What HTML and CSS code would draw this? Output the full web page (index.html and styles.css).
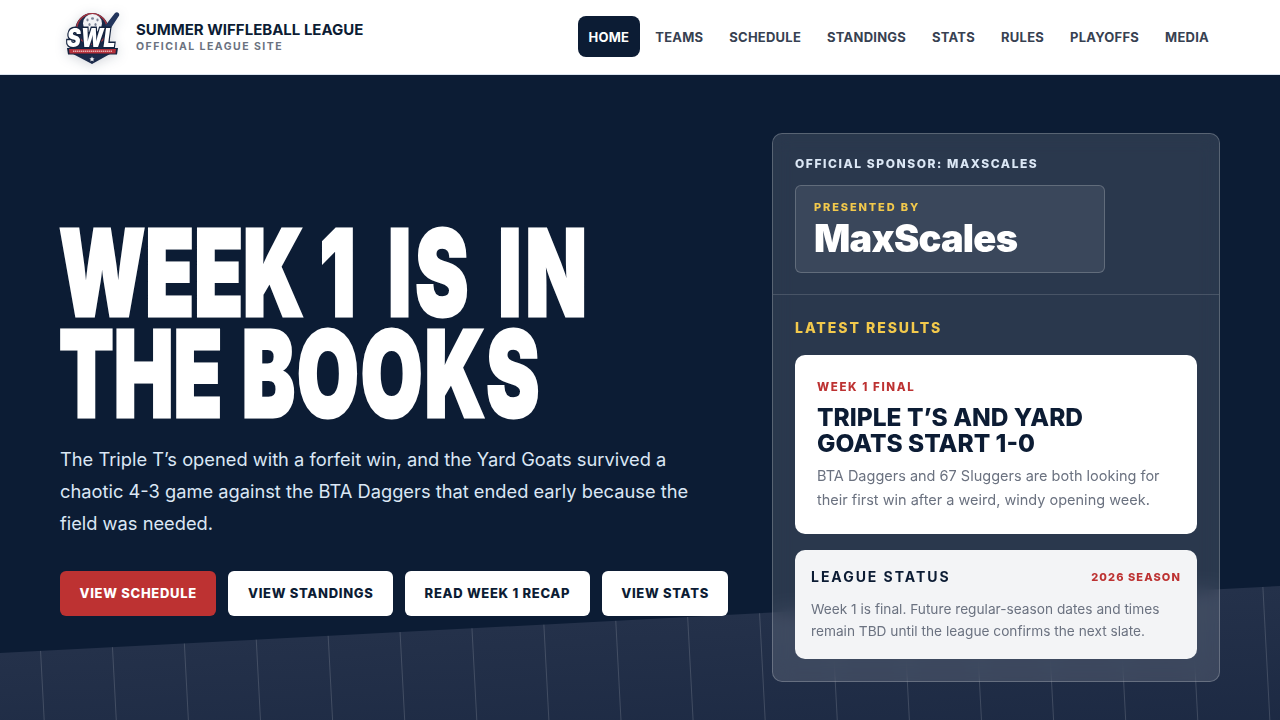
FILE: index.html
```html
<!DOCTYPE html>
<html lang="en">
<head>
    <meta charset="UTF-8">
    <meta name="viewport" content="width=device-width, initial-scale=1.0">
    <title>Summer Wiffleball League</title>
    <link rel="stylesheet" href="styles.css">
</head>
<body>
    <header class="topbar">
        <a href="#" class="brand">
            <svg class="brand_logo" viewBox="0 0 64 64" aria-hidden="true">
                <path d="M15 26 A17 18 0 0 1 49 26 L50 49 L32 59 L13 49Z" fill="#1b2a4a"/>
                <circle cx="32" cy="24" r="16" fill="#a9343f"/>
                <circle cx="32" cy="24" r="14.6" fill="#1b2a4a"/>
                <circle cx="32.5" cy="18.5" r="9.5" fill="#f1f2f5"/>
                <ellipse cx="32.5" cy="13.5" rx="1.5" ry="1.2" fill="#7a8296"/>
                <ellipse cx="27.5" cy="15" rx="1.1" ry="1.4" fill="#7a8296"/>
                <ellipse cx="37.5" cy="15" rx="1.1" ry="1.4" fill="#7a8296"/>
                <ellipse cx="29.5" cy="19.5" rx="1.1" ry="1.5" fill="#7a8296"/>
                <ellipse cx="35.5" cy="19.5" rx="1.1" ry="1.5" fill="#7a8296"/>
                <path d="M41 26 L55 8 Q57 6.5 58.5 8 Q60 9.5 58.5 11.5 L47 29Z" fill="#22355c"/>
                <text class="logo_text" text-anchor="middle" transform="translate(31 42) scale(1 1.2)">SWL</text>
                <path d="M7 43 H58 L57 49.5 H8Z" fill="#14233f"/>
                <path d="M9 44 H56 L55.5 48.5 H9.5Z" fill="#b5303a"/>
                <path d="M13 46.3 H52" stroke="#f3d9d9" stroke-width="1.6" stroke-dasharray="1.4 .6" opacity=".75"/>
                <path d="M32 51.5 l.8 1.7 1.8 .2 -1.3 1.2 .3 1.8 -1.6 -.9 -1.6 .9 .3 -1.8 -1.3 -1.2 1.8 -.2Z" fill="#f1f2f5"/>
            </svg>
            <span class="brand_text">
                <span class="brand_title">SUMMER WIFFLEBALL LEAGUE</span>
                <span class="brand_sub">OFFICIAL LEAGUE SITE</span>
            </span>
        </a>
        <nav class="mainnav">
            <a href="#" class="active">HOME</a>
            <a href="#">TEAMS</a>
            <a href="#">SCHEDULE</a>
            <a href="#">STANDINGS</a>
            <a href="#">STATS</a>
            <a href="#">RULES</a>
            <a href="#">PLAYOFFS</a>
            <a href="#">MEDIA</a>
        </nav>
    </header>

    <main class="hero">
        <div class="ground"></div>

        <section class="hero_left">
            <h1 class="headline">WEEK 1 <span class="head_end">IS IN</span><br>THE <span class="head_books">BOOKS</span></h1>
            <p class="lede">The Triple T&rsquo;s opened with a forfeit win, and the Yard Goats survived a chaotic 4-3 game against the BTA Daggers that ended early because the field was needed.</p>
            <div class="actions">
                <a href="#" class="btn btn_red">VIEW SCHEDULE</a>
                <a href="#" class="btn">VIEW STANDINGS</a>
                <a href="#" class="btn">READ WEEK 1 RECAP</a>
                <a href="#" class="btn">VIEW STATS</a>
            </div>
        </section>

        <aside class="panel">
            <div class="sponsor">
                <p class="sponsor_label">OFFICIAL SPONSOR: MAXSCALES</p>
                <div class="sponsor_box">
                    <p class="presented">PRESENTED BY</p>
                    <p class="sponsor_name">MaxScales</p>
                </div>
            </div>
            <div class="results">
                <h2 class="results_title">LATEST RESULTS</h2>
                <article class="result_card">
                    <p class="result_tag">WEEK 1 FINAL</p>
                    <h3 class="result_head">TRIPLE T&rsquo;S AND YARD GOATS START 1-0</h3>
                    <p class="result_text">BTA Daggers and 67 Sluggers are both looking for their first win after a weird, windy opening week.</p>
                </article>
                <article class="status_card">
                    <div class="status_top">
                        <h3 class="status_title">LEAGUE STATUS</h3>
                        <span class="status_season">2026 SEASON</span>
                    </div>
                    <p class="status_text">Week 1 is final. Future regular-season dates and times remain TBD until the league confirms the next slate.</p>
                </article>
            </div>
        </aside>
    </main>
</body>
</html>
```

FILE: styles.css
```css
*{
    margin:0;
    padding:0;
    box-sizing:border-box;
}
html,body{
    height:100%;
    overflow:hidden;
}
body{
    font-family:Inter,"Liberation Sans",sans-serif;
    background:#0c1c34;
}
a{
    text-decoration:none;
}

/* top bar */
.topbar{
    height:75px;
    padding:0 60px 1px;
    display:flex;
    justify-content:space-between;
    align-items:center;
    background:#fff;
    border-bottom:1px solid #dbe3ee;
}
.brand{
    display:flex;
    align-items:center;
    gap:12px;
}
.brand_logo{
    width:64px;
    height:64px;
    filter:drop-shadow(0 2px 6px rgba(13,27,54,.18));
}
.logo_text{
    font-family:Inter,"Liberation Sans",sans-serif;
    font-size:21px;
    font-weight:900;
    font-style:italic;
    fill:#fff;
    stroke:#14233f;
    stroke-width:2.4px;
    paint-order:stroke;
}
.brand_text{
    display:flex;
    flex-direction:column;
    padding-top:1px;
}
.brand_title{
    font-size:15px;
    font-weight:700;
    line-height:20px;
    color:#0c1c34;
}
.brand_sub{
    font-size:10.5px;
    font-weight:700;
    line-height:14px;
    letter-spacing:.14em;
    color:#6b7280;
}
.mainnav{
    display:flex;
    align-items:center;
    gap:4px;
}
.mainnav a{
    height:41px;
    padding:0 11px;
    display:flex;
    align-items:center;
    border-radius:8px;
    font-size:13px;
    font-weight:700;
    letter-spacing:.018em;
    color:#374151;
}
.mainnav a.active{
    background:#0c1c34;
    color:#fff;
}

/* hero */
.hero{
    position:relative;
    height:645px;
    padding:58px 60px 0;
    display:flex;
    justify-content:space-between;
    overflow:hidden;
    background:#0c1c34;
}
.ground{
    position:absolute;
    left:-27px;
    top:544px;
    width:1360px;
    height:240px;
    transform:rotate(-3deg);
    background:
        repeating-linear-gradient(90deg,transparent 0,rgba(255,255,255,.15) 1px,transparent 2px,transparent 72px),
        linear-gradient(180deg,#24314a,#17243e);
}
.hero_left{
    position:relative;
    width:680px;
    padding-top:90px;
}
.headline{
    margin-left:-1px;
    font-size:119px;
    line-height:101px;
    font-weight:900;
    color:#fff;
    -webkit-text-stroke:3px #fff;
    transform:scaleX(.67);
    transform-origin:left top;
    white-space:nowrap;
}
.head_end{
    margin-left:25px;
    letter-spacing:6px;
    word-spacing:9px;
}
.head_books{
    margin-left:5px;
    letter-spacing:3px;
}
.lede{
    max-width:645px;
    margin-top:18px;
    font-size:18.3px;
    line-height:32px;
    color:#dbe7f5;
}
.actions{
    margin-top:32px;
    display:flex;
    gap:12px;
    white-space:nowrap;
}
.btn{
    height:45px;
    padding:0 19.5px 1px;
    display:flex;
    align-items:center;
    border-radius:6px;
    background:#fff;
    font-size:13px;
    font-weight:800;
    letter-spacing:.054em;
    color:#0c1c34;
}
.btn_red{
    background:#bd3232;
    color:#fff;
}

/* right panel */
.panel{
    position:relative;
    width:448px;
    height:549px;
    border:1px solid rgba(255,255,255,.22);
    border-radius:10px;
    background:rgba(255,255,255,.125);
    backdrop-filter:blur(10px);
}
.sponsor{
    height:161px;
    padding:22px 22px 0;
    border-bottom:1px solid rgba(255,255,255,.14);
}
.sponsor_label{
    font-size:12px;
    line-height:16px;
    font-weight:800;
    letter-spacing:.13em;
    color:#dbe7f5;
}
.sponsor_box{
    width:310px;
    height:88px;
    margin-top:13px;
    padding:13px 18px 0;
    border:1px solid rgba(255,255,255,.2);
    border-radius:6px;
    background:rgba(255,255,255,.08);
}
.presented{
    font-size:11px;
    line-height:16px;
    font-weight:800;
    letter-spacing:.17em;
    color:#f2c94c;
}
.sponsor_name{
    font-size:38px;
    line-height:47px;
    font-weight:900;
    letter-spacing:-.02em;
    color:#fff;
}
.results{
    padding:24px 22px 0;
}
.results_title{
    font-size:14px;
    line-height:18px;
    font-weight:800;
    letter-spacing:.14em;
    color:#f2c94c;
}
.result_card{
    height:179px;
    margin-top:18px;
    padding:24px 22px 0;
    border-radius:10px;
    background:#fff;
}
.result_tag{
    font-size:11.5px;
    line-height:16px;
    font-weight:800;
    letter-spacing:.14em;
    color:#bd3232;
}
.result_head{
    max-width:300px;
    margin-top:9px;
    font-size:24.5px;
    line-height:26px;
    font-weight:800;
    color:#0c1c34;
}
.result_text{
    margin-top:8px;
    font-size:14.5px;
    line-height:24px;
    color:#6b7280;
}
.status_card{
    height:109px;
    margin-top:16px;
    padding:17px 16px 0;
    border-radius:10px;
    background:#f3f4f6;
}
.status_top{
    display:flex;
    justify-content:space-between;
    align-items:center;
}
.status_title{
    font-size:14px;
    line-height:20px;
    font-weight:700;
    letter-spacing:.14em;
    color:#0c1c34;
}
.status_season{
    font-size:11px;
    font-weight:800;
    letter-spacing:.1em;
    color:#bd3232;
}
.status_text{
    margin-top:11px;
    font-size:13.7px;
    line-height:22px;
    color:#6b7280;
}
```
